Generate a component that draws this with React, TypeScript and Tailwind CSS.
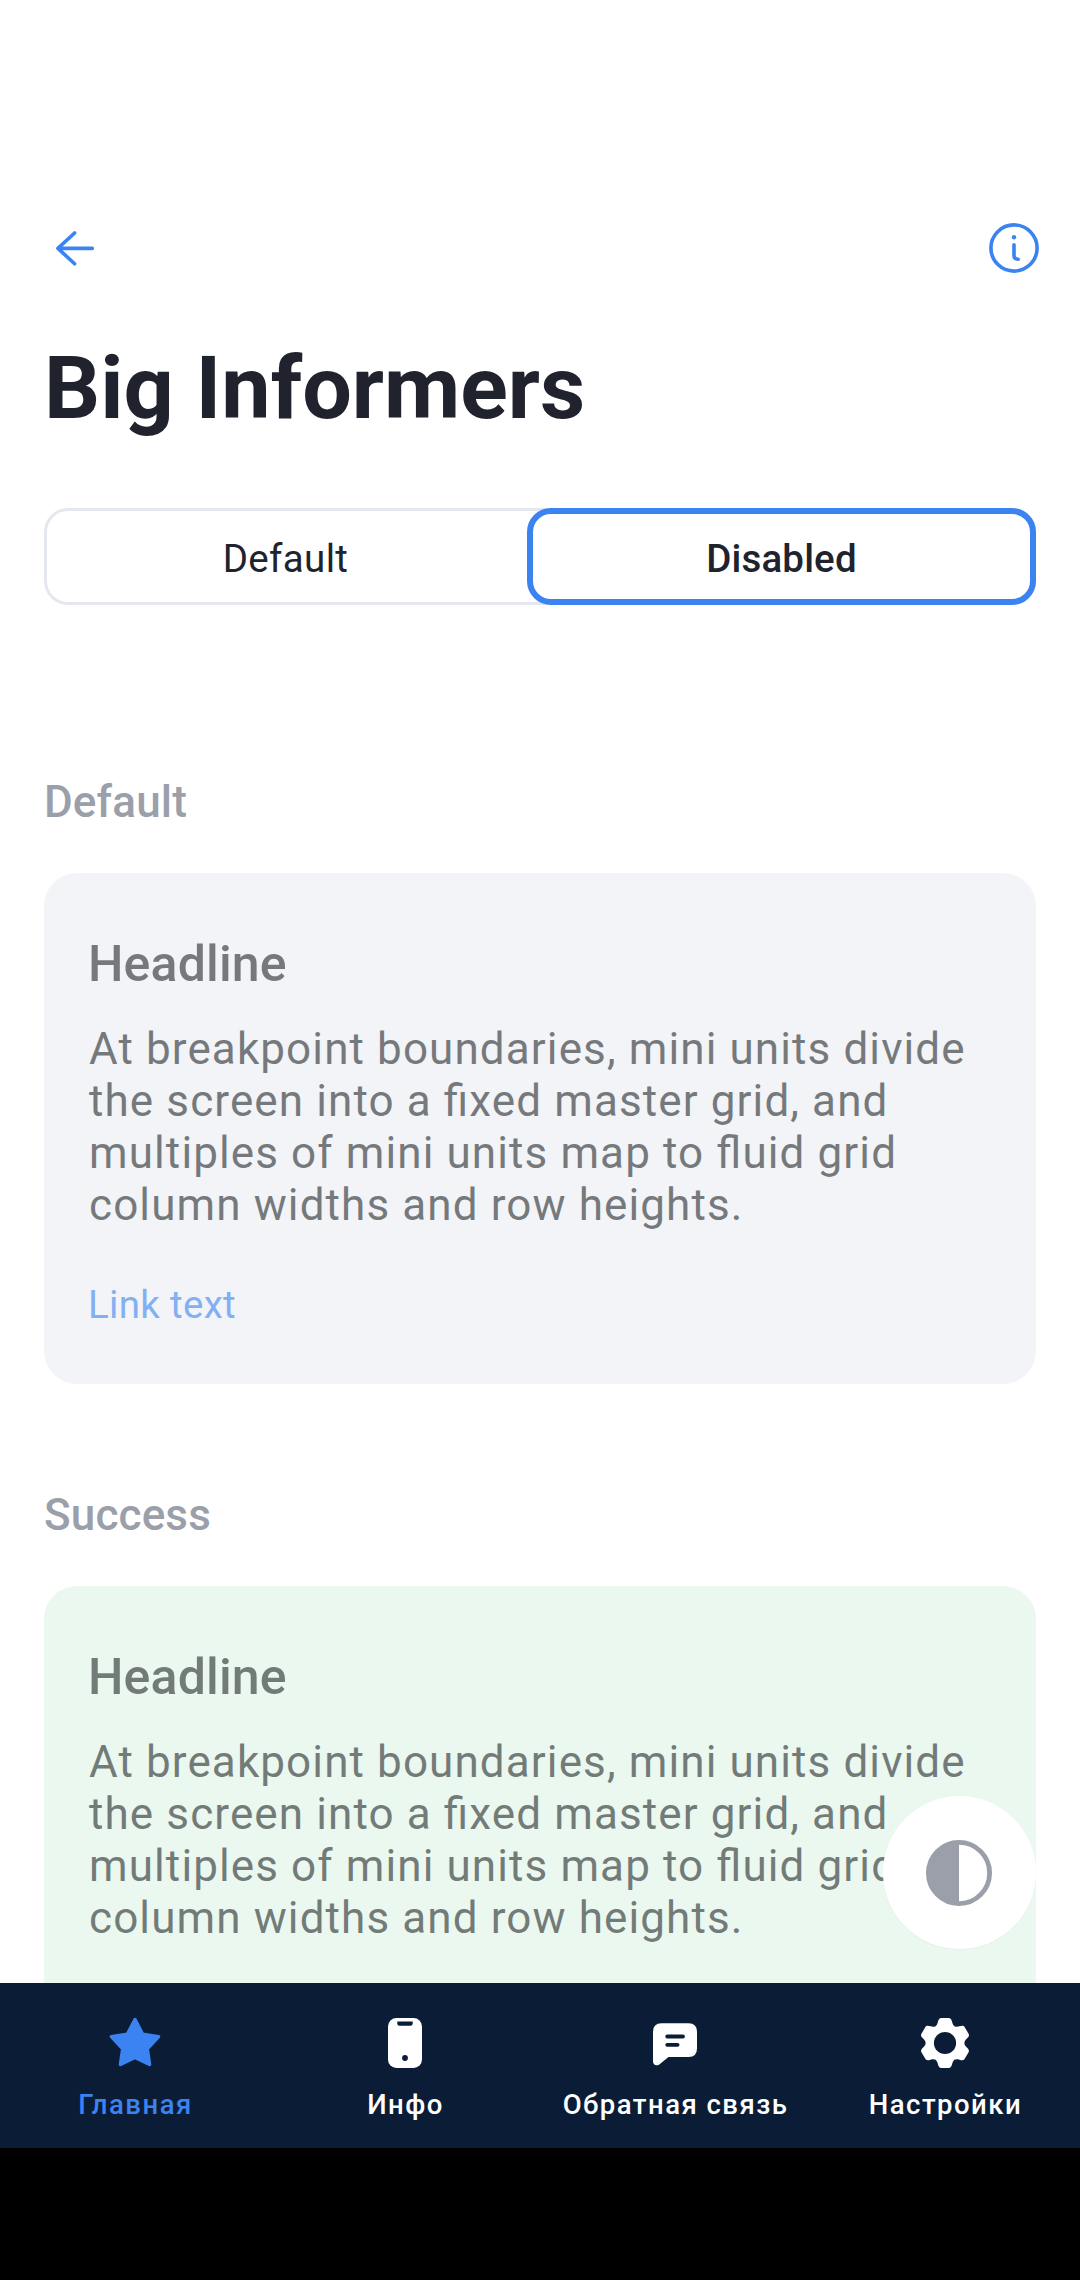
import React from "react";

const body = [
  "At breakpoint boundaries, mini units divide",
  "the screen into a fixed master grid, and",
  "multiples of mini units map to fluid grid",
  "column widths and row heights.",
];

function Informer({ title, tone, link }: { title: string; tone: string; link?: string }) {
  return (
    <section className="mb-[105px]">
      <h2 className="h-[52px] text-[44px] leading-[52px] font-medium tracking-[0.15px] text-[#9a9faa]">{title}</h2>
      <div className={`mt-[45px] h-[511px] rounded-[33px] px-[44px] pt-[61px] ${tone}`}>
        <div className="opacity-60">
          <h3 className="h-[60px] text-[50px] leading-[60px] font-medium tracking-[0.15px] text-[#25292b]">Headline</h3>
          <div className="mt-[29px] pl-[1px] text-[44px] leading-[52px] tracking-[1.11px] text-[#25292b] [font-feature-settings:'liga'_1]">
            {body.map((l) => (
              <p key={l} className="whitespace-nowrap">{l}</p>
            ))}
          </div>
          {link && <a className="mt-[51px] block text-[38.5px] leading-[46px] tracking-[0.32px] text-[#3a83f1]">{link}</a>}
        </div>
      </div>
    </section>
  );
}

function Tab({ label, active, children }: { label: string; active?: boolean; children: React.ReactNode }) {
  return (
    <div className={`flex w-[270px] flex-col items-center ${active ? "text-[#3a83f1]" : "text-white"}`}>
      <svg viewBox="0 0 66 66" className="mt-[27px] h-[66px] w-[66px]" fill="currentColor">{children}</svg>
      <span className="mt-[12px] pl-[1px] text-[27.5px] leading-[33px] font-medium tracking-[1.48px] whitespace-nowrap">{label}</span>
    </div>
  );
}

const toothAngles = [0, 60, 120, 180, 240, 300];

export default function App() {
  return (
    <div className="relative flex h-[2280px] w-[1080px] flex-col overflow-hidden bg-white font-['Roboto',sans-serif]">
      <main className="h-[1983px] overflow-hidden px-[44px] pt-[215px]">
        <header className="flex h-[66px] items-center justify-between text-[#3a83f1]">
          <svg viewBox="0 0 66 66" className="h-[66px] w-[66px]" fill="none" stroke="currentColor" strokeWidth="3.6" strokeLinecap="round" strokeLinejoin="round">
            <path d="M48.3 33.4H13.9M30.6 18L13.9 33.4L30.6 48.8" />
          </svg>
          <svg viewBox="0 0 66 66" className="-mr-[11px] h-[66px] w-[66px]" fill="none" stroke="currentColor" strokeWidth="3.6" strokeLinecap="round">
            <circle cx="33" cy="33" r="23.1" />
            <path d="M33 29.8V40.5Q33 44.2 37.2 44.2" />
            <circle cx="33" cy="22.2" r="2.2" fill="currentColor" stroke="none" />
          </svg>
        </header>
        <h1 className="mt-[55px] h-[104px] text-[88px] leading-[104px] font-bold text-[#20232d]">Big Informers</h1>
        <div className="mt-[68px] mb-[171px] flex h-[97px] rounded-[24px] text-[38.5px] text-[#20232d] ring-[3px] ring-[#e4e8ee] ring-inset">
          <div className="flex w-[483px] items-center justify-center pt-[5px] tracking-[0.35px]">Default</div>
          <div className="flex flex-1 items-center justify-center rounded-[24px] border-6 border-[#3a83f1] bg-white pt-[5px] font-medium tracking-[0.15px]">Disabled</div>
        </div>
        <Informer title="Default" tone="bg-[#f2f4f8]" link="Link text" />
        <Informer title="Success" tone="bg-[#ebf8f0]" />
      </main>
      <button className="absolute top-[1796px] left-[883px] flex h-[153px] w-[153px] items-center justify-center rounded-full bg-white pr-[1px] text-[#9a9faa] shadow-[0_1px_1px_rgba(0,0,0,0.03)]">
        <svg viewBox="0 0 66 66" className="h-[66px] w-[66px]" fill="none">
          <circle cx="33" cy="33" r="30.6" stroke="currentColor" strokeWidth="4.8" />
          <path d="M33 1A32 32 0 0 0 33 65Z" fill="currentColor" />
        </svg>
      </button>
      <nav className="flex h-[165px] bg-[#0b1d36]">
        <Tab label="Главная" active>
          <path d="M33 9.6L40.7 24.2L56.6 26.6L45.3 38.8L47.6 54.6L33 47.4L18.4 54.6L20.7 38.8L9.4 26.6L25.3 24.2Z" stroke="currentColor" strokeWidth="3.4" strokeLinejoin="round" />
        </Tab>
        <Tab label="Инфо">
          <rect x="16" y="8" width="34" height="50" rx="8.5" />
          <path d="M25.3 11.4H40.7V13.6Q40.7 15.8 38.5 15.8H27.5Q25.3 15.8 25.3 13.6Z" fill="#0b1d36" />
          <circle cx="33" cy="48" r="2.9" fill="#0b1d36" />
        </Tab>
        <Tab label="Обратная связь">
          <path d="M19.5 13.3H46.5Q55 13.3 55 21.8V38.5Q55 47 46.5 47H26.5L17.3 54.4C14.3 56.5 11 54.8 11 51.5V21.8Q11 13.3 19.5 13.3Z" />
          <path d="M25.2 26.5H41M25.2 34.8H35.6" stroke="#0b1d36" strokeWidth="3.8" strokeLinecap="round" />
        </Tab>
        <Tab label="Настройки">
          <circle cx="33" cy="33" r="18.5" />
          {toothAngles.map((a) => (
            <path
              key={a}
              transform={`translate(33 33) rotate(${a})`}
              d="M0 0L-9.7 -16.8C-8.2 -17.6 -7.7 -19 -7.2 -20.8C-6.4 -24 -5.6 -25 -3.6 -25H3.6C5.6 -25 6.4 -24 7.2 -20.8C7.7 -19 8.2 -17.6 9.7 -16.8Z"
            />
          ))}
          <circle cx="33" cy="33" r="11.1" fill="#0b1d36" />
        </Tab>
      </nav>
      <div className="h-[132px] bg-black" />
    </div>
  );
}
